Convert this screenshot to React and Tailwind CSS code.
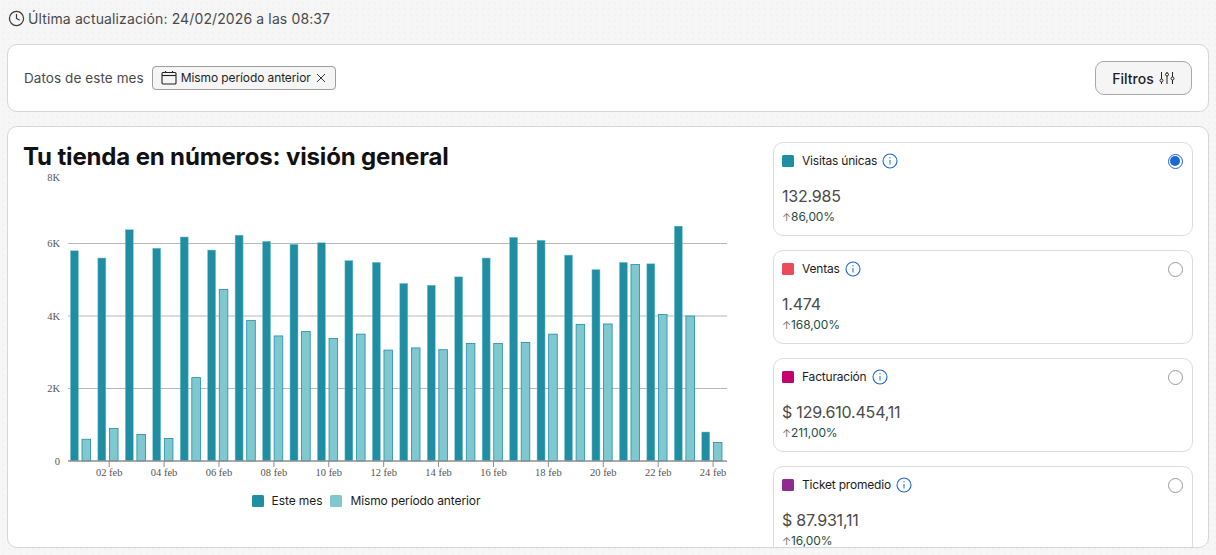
import React from "react";

const cur = [5800,5600,6380,5870,6180,5820,6230,6060,5980,6020,5530,5480,4900,4850,5080,5600,6170,6090,5680,5280,5480,5440,6480,800];
const prev = [600,900,730,620,2300,4730,3880,3450,3570,3380,3500,3060,3120,3070,3240,3240,3270,3500,3770,3780,5420,4040,4000,510];

const LEFT = 45; // plot start inside the svg
const BAND = 27.45;
const Y0 = 289; // zero line inside the svg
const scale = 72.5 / 2000;

function Chart() {
  const ticks = [["8K", 8000], ["6K", 6000], ["4K", 4000], ["2K", 2000]];
  return (
    <svg width="717" height="308" viewBox="0 0 717 308" className="block">
      {ticks.map(([l, v]) => {
        const y = Y0 - v * scale;
        return (
          <g key={l}>
            <line x1={LEFT} x2={LEFT + 659} y1={y} y2={y} stroke={v === 8000 ? "#d4d4d4" : "#b8b8b8"} strokeWidth="1" />
            <text x={LEFT - 8} y={y + (v === 8000 ? 9.5 : 3.5)} textAnchor="end" fontFamily="'Liberation Serif', serif" fontSize="10.5" fill="#555">{l}</text>
          </g>
        );
      })}
      <text x={LEFT - 8} y={Y0 + 4} textAnchor="end" fontFamily="'Liberation Serif', serif" fontSize="10.5" fill="#555">0</text>
      {cur.map((v, i) => {
        const x = LEFT + i * BAND + 2.4;
        const h = v * scale;
        const p = prev[i] * scale;
        return (
          <g key={i}>
            <rect x={x} y={Y0 - h} width="8" height={h} fill="#1f8ea3" stroke="#7fc7d0" strokeWidth="0.5" />
            <rect x={x + 11.6} y={Y0 - p} width="8.6" height={p} fill="#80c8d0" stroke="#1f8ea3" strokeWidth="0.8" />
          </g>
        );
      })}
      <line x1={LEFT} x2={LEFT + 659} y1={Y0} y2={Y0} stroke="#8f8f8f" strokeWidth="1.5" />
      {cur.map((_, i) => {
        if (i % 2 === 0) return null;
        const x = LEFT + (i + 0.5) * BAND;
        const label = `${String(i + 1).padStart(2, "0")} feb`;
        return (
          <g key={i}>
            <line x1={x} x2={x} y1={Y0} y2={Y0 + 6} stroke="#8f8f8f" strokeWidth="1" />
            <text x={x} y={Y0 + 15} textAnchor="middle" fontFamily="'Liberation Serif', serif" fontSize="10.5" fill="#555">{label}</text>
          </g>
        );
      })}
    </svg>
  );
}

function Info() {
  return (
    <svg width="16" height="16" viewBox="0 0 16 16" fill="none">
      <circle cx="8" cy="8" r="7" stroke="#1d66d6" strokeWidth="1.1" />
      <line x1="8" y1="7" x2="8" y2="11.6" stroke="#3d9db5" strokeWidth="1.3" />
      <circle cx="8" cy="4.8" r="0.8" fill="#3d9db5" />
    </svg>
  );
}

function Card({ color, label, value, pct, selected }) {
  return (
    <div className="h-[94px] shrink-0 rounded-[10px] border border-[#dcdcdc] bg-white px-2 pt-[10px] flex flex-col">
      <div className="flex items-center h-4">
        <span className={`w-3 h-3 rounded-[1.5px] ${color}`} />
        <span className="ml-2 text-[12px] leading-4 tracking-[-0.2px] text-[#1c1c1c]">{label}</span>
        <span className="ml-[5px] flex"><Info /></span>
        {selected ? (
          <span className="ml-auto mr-[1.5px] w-[15px] h-[15px] rounded-full border border-[#1d66d6] flex items-center justify-center">
            <span className="w-[10px] h-[10px] rounded-full bg-[#1d66d6]" />
          </span>
        ) : (
          <span className="ml-auto mr-[1.5px] w-[15px] h-[15px] rounded-full border border-[#9a9a9a]" />
        )}
      </div>
      <div className="mt-[17px] text-[16px] leading-5 tracking-[-0.2px] text-[#4a4a4a]">{value}</div>
      <div className="mt-[3px] flex items-center text-[12px] leading-4 tracking-[-0.1px] text-[#1f4d3f]">
        <span className="text-[#777] text-[11px] leading-4">↑</span>{pct}
      </div>
    </div>
  );
}

export default function App() {
  return (
    <div className="h-[555px] overflow-hidden bg-[#f6f6f6] bg-[radial-gradient(#ececec_0.6px,transparent_0.8px)] bg-[length:6px_6px] px-[7px] font-['Inter','Liberation_Sans',sans-serif]">
      <div className="h-[44px] flex items-center pb-[8px] pl-[1px]">
        <svg width="17" height="17" viewBox="0 0 24 24" fill="none" stroke="#3a3a3a" strokeWidth="1.7" strokeLinecap="round" strokeLinejoin="round">
          <circle cx="12" cy="12" r="10" />
          <path d="M12 6v6l4 2" />
        </svg>
        <span className="ml-[3px] text-[14px] tracking-[0.12px] text-[#4a4a4a]">Última actualización: 24/02/2026 a las 08:37</span>
      </div>

      <div className="h-[68px] rounded-[10px] border border-[#d6d6d6] bg-white flex items-center pl-[16px] pr-[16px]">
        <span className="text-[13.5px] tracking-[0.08px] text-[#4a4a4a]">Datos de este mes</span>
        <div className="ml-2 h-6 rounded-[4px] border border-[#9e9e9e] bg-[#f5f5f5] flex items-center pl-2 pr-[9px]">
          <svg width="16" height="16" viewBox="0 0 16 16" fill="none" stroke="#222" strokeWidth="1.1">
            <rect x="1" y="2.5" width="14" height="11.5" rx="1" />
            <line x1="1" y1="5.5" x2="15" y2="5.5" />
            <line x1="4.5" y1="1" x2="4.5" y2="2.5" />
            <line x1="11.5" y1="1" x2="11.5" y2="2.5" />
          </svg>
          <span className="ml-[4px] text-[12px] tracking-[-0.1px] text-[#1f1f1f]">Mismo período anterior</span>
          <svg className="ml-[5px]" width="10" height="10" viewBox="0 0 10 10" stroke="#333" strokeWidth="1">
            <path d="M1 1l8 8M9 1l-8 8" />
          </svg>
        </div>
        <button className="ml-auto h-[34px] w-[97px] rounded-[9px] border border-[#a8a8a8] bg-[#f5f5f5] flex items-center justify-center gap-[5px] text-[14px] font-medium text-[#1f1f1f]">
          <span>Filtros</span>
          <svg width="16" height="14" viewBox="0 0 16 14" fill="none" stroke="#222" strokeWidth="1">
            <path d="M2.5 1v7M2.5 11v2M8 1v1M8 5v8M13.5 1v5M13.5 9v4" />
            <circle cx="2.5" cy="9.5" r="1.5" />
            <circle cx="8" cy="3.5" r="1.5" />
            <circle cx="13.5" cy="7.5" r="1.5" />
          </svg>
        </button>
      </div>

      <div className="mt-[14px] h-[422px] rounded-[10px] border border-[#d6d6d6] bg-white flex overflow-hidden">
        <div className="w-[765px] shrink-0 pl-[15px] pt-[15px]">
          <h2 className="text-[24px] leading-[30px] font-bold tracking-[-0.15px] text-[#111]">Tu tienda en números: visión general</h2>
          <Chart />
          <div className="w-[686px] mt-[12px] flex items-center justify-center gap-2 text-[12px] tracking-[-0.1px] text-[#1c1c1c]">
            <span className="w-3 h-3 rounded-[1.5px] bg-[#1f8ea3]" />
            <span>Este mes</span>
            <span className="w-3 h-3 rounded-[1.5px] bg-[#80c8d0]" />
            <span>Mismo período anterior</span>
          </div>
        </div>
        <div className="w-[420px] shrink-0 pt-[15px] flex flex-col gap-[14px]">
          <Card color="bg-[#1f8ea3]" label="Visitas únicas" value="132.985" pct="86,00%" selected />
          <Card color="bg-[#ea4a5a]" label="Ventas" value="1.474" pct="168,00%" />
          <Card color="bg-[#c4006e]" label="Facturación" value="$ 129.610.454,11" pct="211,00%" />
          <Card color="bg-[#8f2a8f]" label="Ticket promedio" value="$ 87.931,11" pct="16,00%" />
        </div>
      </div>
    </div>
  );
}
